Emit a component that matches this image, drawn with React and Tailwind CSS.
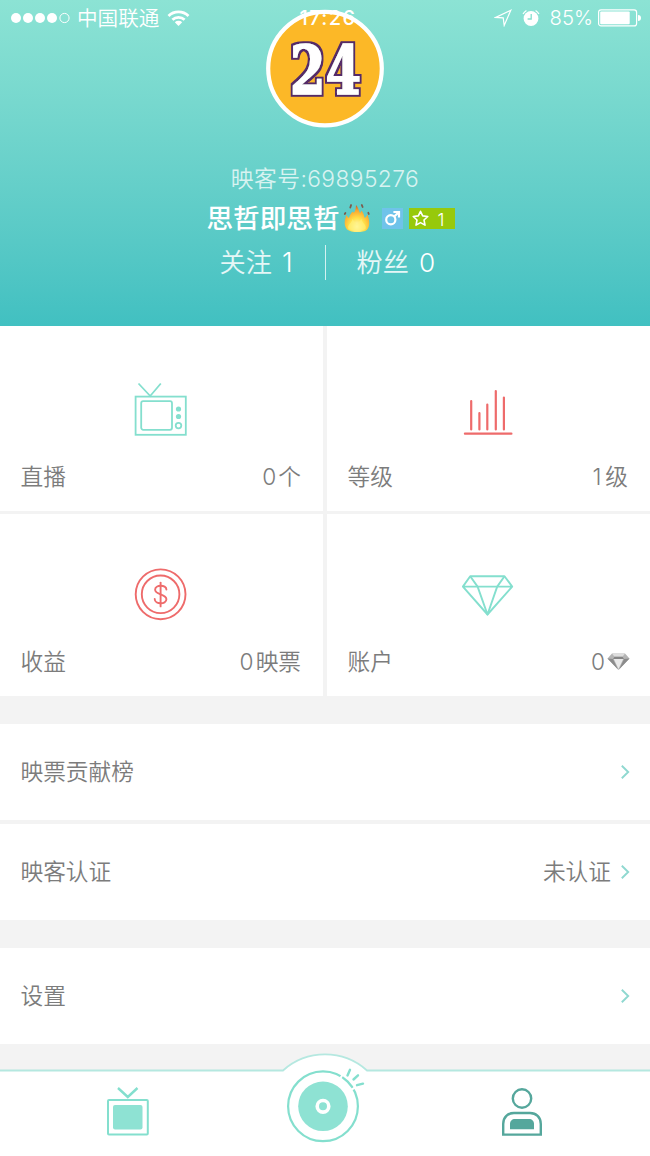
const TEAL = "#84dfce";
const RED = "#ee6b6b";

function StatusBar() {
  return (
    <div className="absolute inset-x-0 top-0 flex h-9 items-center text-[20px] leading-9 text-white">
      <div className="flex flex-1 items-center pl-[11px]">
        <svg width="60" height="12" viewBox="0 0 60 12" fill="#fff">
          <circle cx="5" cy="6" r="5" />
          <circle cx="17" cy="6" r="5" />
          <circle cx="29" cy="6" r="5" />
          <circle cx="41" cy="6" r="5" />
          <circle cx="53.5" cy="6" r="4.6" fill="none" stroke="#fff" strokeWidth="1" />
        </svg>
        <span className="ml-[6px] pt-[2px] text-[20.6px] font-[350] whitespace-nowrap">中国联通</span>
        <svg className="ml-[8px]" width="23" height="18" viewBox="0 0 23 18" fill="none" stroke="#fff" strokeWidth="2.8">
          <path d="M1.5 7 A14.3 14.3 0 0 1 21.5 7" />
          <path d="M5.4 10.8 A9 9 0 0 1 17.6 10.8" />
          <path d="M11.5 17 L7.8 13.2 A5.4 5.4 0 0 1 15.2 13.2 Z" fill="#fff" stroke="none" />
        </svg>
      </div>
      <span className="pl-[4px] font-medium tracking-[1.4px]">17:26</span>
      <div className="flex flex-1 items-center justify-end pr-[9px]">
        <svg width="18" height="18" viewBox="0 0 18 18" fill="none" stroke="#fff" strokeWidth="1.2" strokeLinejoin="miter">
          <path d="M16.8 1.2 L1.8 8.4 L9.2 8.9 L10.2 16.4 Z" />
        </svg>
        <svg className="ml-[10px]" width="18" height="18" viewBox="0 0 18 18">
          <circle cx="9" cy="9.5" r="7.4" fill="#fff" />
          <path d="M9.2 5 V10 H5.6" fill="none" stroke="#84dfce" strokeWidth="1.3" />
          <path d="M1 5 A9.5 9.5 0 0 1 4.4 1.4 M13.6 1.4 A9.5 9.5 0 0 1 17 5" fill="none" stroke="#fff" strokeWidth="1.2" />
        </svg>
        <span className="ml-[10px] text-[20.3px] font-light">85%</span>
        <svg className="ml-[5px]" width="43" height="18" viewBox="0 0 43 18">
          <rect x="0.6" y="0.9" width="38" height="16" rx="2.5" fill="none" stroke="#fff" strokeWidth="1.2" />
          <rect x="2.2" y="2.5" width="29.5" height="12.8" rx="1" fill="#fff" />
          <path d="M40 6 A3 3 0 0 1 40 12 Z" fill="#fff" />
        </svg>
      </div>
    </div>
  );
}

function Flame() {
  return (
    <svg width="28" height="30" viewBox="0 0 28 30">
      <defs>
        <radialGradient id="flame" cx="0.5" cy="0.8" r="0.8">
          <stop offset="0" stopColor="#fffbc0" />
          <stop offset="0.4" stopColor="#ffe04a" />
          <stop offset="0.75" stopColor="#f9a52e" />
          <stop offset="1" stopColor="#c45a2a" />
        </radialGradient>
      </defs>
      <path
        d="M4 26.5 C0.5 22 1.5 17 3.5 12 C4.5 14 5 14.5 6 15 C6.5 12.5 8 10.5 9.5 8.5 C10 9.5 10.4 9.8 11 9.5 C12.5 7.5 12.8 5 13 2 C15.5 4.5 15.6 8 17 10 C17.8 9.5 18 8.5 18.4 7.5 C20.5 9.5 20.8 12.5 21.8 15 C23 14 23.6 13 24.4 11.5 C26.5 17 27.5 23 23.8 27 C20 29.8 8 29.8 4 26.5 Z"
        fill="url(#flame)"
      />
      <path d="M5.5 26 C3.8 21.5 8.5 21 9.5 16 C11 18 12 19.5 14 21 C15.5 19.5 17 18 18.5 16 C19 20.5 24 21.5 22.5 26 C19 28.4 9 28.4 5.5 26 Z" fill="#fff27a" opacity="0.6" />
      <path d="M1.8 11 l0.6 -1 M7.3 4.6 l0.8 -2.6 M19.6 4 l-0.8 -2 M25.8 11 l-0.5 -1.2" stroke="#7d5b4c" strokeWidth="1.8" strokeLinecap="round" />
    </svg>
  );
}

function Avatar() {
  return (
    <svg className="overflow-visible" width="118" height="118" viewBox="0 0 118 118">
      <defs>
        <filter id="outline" x="-10%" y="-10%" width="120%" height="120%">
          <feMorphology in="SourceAlpha" operator="dilate" radius="2" result="wide" />
          <feFlood floodColor="#552a68" />
          <feComposite in2="wide" operator="in" />
          <feMerge>
            <feMergeNode />
            <feMergeNode in="SourceGraphic" />
          </feMerge>
        </filter>
      </defs>
      <circle cx="59" cy="58.6" r="56.8" fill="#fcb827" stroke="#fff" strokeWidth="4.2" />
      <text
        x="24"
        y="84"
        textLength="71"
        lengthAdjust="spacingAndGlyphs"
        fontFamily="'DejaVu Serif', serif"
        fontWeight="700"
        fontSize="68"
        fill="#fff"
        stroke="#fff"
        strokeWidth="1.6"
        strokeLinejoin="miter"
        filter="url(#outline)"
      >
        24
      </text>
    </svg>
  );
}

function Profile() {
  return (
    <header className="relative flex h-[326px] flex-col items-center bg-linear-to-b from-[#8ce3d4] to-[#41c0c1] pt-[10px] text-white">
      <Avatar />
      <p className="mt-[35px] h-8 text-[22.8px] leading-8 font-[350] tracking-[0.4px] text-white/75">映客号:69895276</p>
      <div className="mt-[7px] flex h-8 items-center pl-[12px]">
        <span className="text-[26.6px] leading-8 font-medium whitespace-nowrap">思哲即思哲</span>
        <span className="ml-[4px]">
          <Flame />
        </span>
        <span className="ml-[11px] flex size-[21px] items-center justify-center bg-[#6fc3ea]">
          <svg width="17" height="17" viewBox="0 0 17 17" fill="none" stroke="#fff" strokeWidth="2.2">
            <circle cx="6.8" cy="9.8" r="4.6" />
            <path d="M10 6.8 L14.8 2.2 M9.4 2 H15 V7.6" />
          </svg>
        </span>
        <span className="ml-[6px] flex h-[21px] w-[46px] items-center bg-[#97c90b] pl-[3px]">
          <svg width="17" height="17" viewBox="0 0 17 17" fill="none" stroke="#fff" strokeWidth="1.6" strokeLinejoin="round">
            <path d="M8.5 1.3 L10.7 5.9 L15.8 6.5 L12 10 L13 15.1 L8.5 12.6 L4 15.1 L5 10 L1.2 6.5 L6.3 5.9 Z" />
          </svg>
          <span className="ml-[8px] pt-[2px] text-[17.5px] leading-[21px] font-light">1</span>
        </span>
      </div>
      <div className="mt-[10px] flex h-[36px] items-center pl-[5px] text-[26.2px] font-[350]">
        <span className="flex w-[105px] items-center gap-[10px] pt-[2px]">
          <span className="text-white/85">关注</span>
          <span className="text-[27px]">1</span>
        </span>
        <span className="h-[35px] w-px bg-white/75" />
        <span className="flex w-[110px] items-center gap-[10px] pt-[2px] pl-[31px] whitespace-nowrap">
          <span className="text-white/85">粉丝</span>
          <span>0</span>
        </span>
      </div>
      <StatusBar />
    </header>
  );
}

function TvIcon() {
  return (
    <svg width="54" height="54" viewBox="0 0 54 54" fill="none" stroke={TEAL} strokeWidth="1.8">
      <rect x="1.6" y="14.6" width="50.2" height="38.2" />
      <path d="M4.5 1.5 L16.2 14 L26.8 1.5" />
      <rect x="7.2" y="19.2" width="30.8" height="28.6" rx="2" />
      <circle cx="44.5" cy="27" r="2.6" fill={TEAL} stroke="none" />
      <circle cx="44.5" cy="34.5" r="2.6" fill={TEAL} stroke="none" />
      <circle cx="44.5" cy="43.6" r="2.8" />
    </svg>
  );
}

function BarsIcon() {
  return (
    <svg width="54" height="54" viewBox="0 0 54 54" fill="none" stroke={RED} strokeWidth="2.2" strokeLinecap="round">
      <path d="M3.9 51.7 H50.4" />
      <path d="M10.2 19 V47.5 M18.4 31 V47.5 M26.3 22.5 V47.5 M34.8 9 V47.5 M42.9 15.5 V47.5" />
    </svg>
  );
}

function CoinIcon() {
  return (
    <svg width="54" height="54" viewBox="0 0 54 54" fill="none" stroke={RED} strokeWidth="1.9" strokeLinecap="round">
      <circle cx="26.6" cy="27.3" r="24.9" />
      <circle cx="26.6" cy="27.3" r="18.8" />
      <path d="M26.6 15.6 V39.4" />
      <path d="M32.4 22.5 C32.4 17.5 21.1 17.5 21.1 22.7 C21.1 28 32.4 26.6 32.4 32.2 C32.4 37.8 20.7 37.6 20.7 32" />
    </svg>
  );
}

function DiamondIcon() {
  return (
    <svg width="54" height="54" viewBox="0 0 54 54" fill="none" stroke={TEAL} strokeWidth="1.9" strokeLinejoin="round">
      <path d="M9.2 9.2 H43.5 L51.2 19.6 L26.5 47.5 L1.9 19.6 Z M1.9 19.6 H51.2" />
      <path d="M9.2 9.2 L16.6 19.6 L26.5 47.5 L36.2 19.6 L43.5 9.2" />
    </svg>
  );
}

function Gem() {
  return (
    <svg width="23" height="18" viewBox="0 0 23 18">
      <path d="M5 0.5 H18 L22.5 5.5 L11.5 17 L0.5 5.5 Z" fill="#b5b5b5" />
      <path d="M5 0.5 H18 L15.5 3.7 H7.5 Z" fill="#dedede" />
      <path d="M7.5 3.7 H15.5 L17 6 H6 Z" fill="#858585" />
      <path d="M6.8 6 H16.2 L11.5 16 Z" fill="#e9e9e9" />
      <path d="M0.5 5.5 L6 6 L11 16.5 Z M22.5 5.5 L17 6 L12 16.5 Z" fill="#8b8b8b" />
    </svg>
  );
}

function Tile({ icon, label, children }) {
  return (
    <div className="flex flex-col justify-end bg-white pr-[22px] pb-[18px] pl-[20.5px]">
      <div className="flex justify-center pl-[1px]">{icon}</div>
      <div className="mt-[25px] flex h-8 items-center justify-between leading-8">
        <span>{label}</span>
        <span className="flex items-center gap-[2px]">{children}</span>
      </div>
    </div>
  );
}

function Row({ label, value }) {
  return (
    <div className="flex h-24 items-center bg-white pr-[20px] pl-[20.5px]">
      <span className="flex-1 pt-[1px]">{label}</span>
      <span className="pt-[1px]">{value}</span>
      <svg className="ml-[9px]" width="10" height="16" viewBox="0 0 10 16" fill="none" stroke="#8fd8d0" strokeWidth="1.9">
        <path d="M1.8 1.8 L8.2 8 L1.8 14.2" />
      </svg>
    </div>
  );
}

function TabBar() {
  return (
    <nav className="relative h-[112px]">
      <svg className="absolute inset-0" width="650" height="112" viewBox="0 0 650 112">
        <path d="M-2 26.5 H283 A63 63 0 0 1 367 26.5 H652 V114 H-2 Z" fill="#fff" stroke="#b5e8e0" strokeWidth="1.8" />
      </svg>
      <div className="relative flex h-full items-start">
        <div className="flex w-[256px] justify-center pt-[42px]">
          <svg width="44" height="52" viewBox="0 0 44 52" fill="none" stroke={TEAL} strokeWidth="2">
            <path d="M12 2 L21.8 11 L31.5 2" strokeWidth="2.4" />
            <rect x="2" y="14" width="39.8" height="34.4" rx="1" />
            <rect x="7" y="19" width="29.5" height="24.5" rx="2" fill="#8ee2d3" stroke="none" />
          </svg>
        </div>
        <div className="flex w-[134px] justify-center pt-[21px]">
          <svg width="86" height="80" viewBox="0 0 86 80" fill="none" stroke={TEAL} strokeWidth="2.2">
            <circle cx="43" cy="41.3" r="34.9" />
            <circle cx="43" cy="41.3" r="24.8" fill="#8ee2d3" stroke="none" />
            <circle cx="43" cy="41.3" r="5.8" stroke="#fff" strokeWidth="3.6" />
            <path d="M60.5 13 L63.3 8.6 M70.8 25.2 L75.2 22.4" stroke="#fff" strokeWidth="2" />
            <g strokeLinecap="round" strokeWidth="2.4">
              <path d="M67.5 10.5 L70 4.8 M73.5 14.5 L78 10.3 M77 20.2 L83 18.6" />
            </g>
          </svg>
        </div>
        <div className="flex flex-1 justify-center pt-[43px] pl-[4px]">
          <svg width="42" height="50" viewBox="0 0 42 50" fill="none" stroke="#55a79c" strokeWidth="2.4">
            <circle cx="21" cy="11.5" r="9.2" />
            <path d="M2.2 47.6 V37 C2.2 30 7 26 13 26 H29 C35 26 39.8 30 39.8 37 V47.6 Z" />
            <path d="M9 42.2 V37 C9 34 11 32 14 32 H28 C31 32 33 34 33 37 V42.2 Z" fill="#55a79c" stroke="none" />
          </svg>
        </div>
      </div>
    </nav>
  );
}

export default function App() {
  return (
    <div className="flex h-[1156px] w-[650px] flex-col overflow-hidden bg-[#f3f3f3] font-[Inter,'Noto_Sans_CJK_SC',sans-serif] text-[22.7px] font-[350] text-[#7c7c7c]">
      <Profile />
      <div className="grid h-[370px] grid-cols-2 grid-rows-[185px_182px] gap-x-[4px] gap-y-[3px]">
        <Tile icon={<TvIcon />} label="直播">
          <span>0</span>
          <span>个</span>
        </Tile>
        <Tile icon={<BarsIcon />} label="等级">
          <span className="pr-[2px]">1</span>
          <span>级</span>
        </Tile>
        <Tile icon={<CoinIcon />} label="收益">
          <span>0</span>
          <span>映票</span>
        </Tile>
        <Tile icon={<DiamondIcon />} label="账户">
          <span>0</span>
          <span className="-mr-[2px]"><Gem /></span>
        </Tile>
      </div>
      <div className="mt-[28px] flex flex-col gap-[4px]">
        <Row label="映票贡献榜" />
        <Row label="映客认证" value="未认证" />
      </div>
      <div className="mt-[28px]">
        <Row label="设置" />
      </div>
      <TabBar />
    </div>
  );
}
